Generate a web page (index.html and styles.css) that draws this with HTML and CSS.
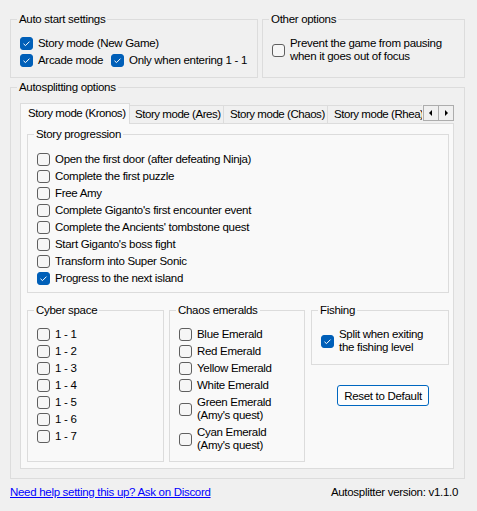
FILE: index.html
```html
<!DOCTYPE html>
<html>
<head>
<meta charset="utf-8">
<link rel="stylesheet" href="styles.css">
</head>
<body>
<div class="top">
  <fieldset class="gb auto">
    <legend>Auto start settings</legend>
    <label class="cb"><span class="box on"><svg viewBox="0 0 13 13" width="13" height="13"><path d="M3.5 6.8 L5.5 8.6 L9.5 4.6" fill="none" stroke="#fff" stroke-width="1"/></svg></span><span>Story mode (New Game)</span></label>
    <div class="row">
      <label class="cb w91"><span class="box on"><svg viewBox="0 0 13 13" width="13" height="13"><path d="M3.5 6.8 L5.5 8.6 L9.5 4.6" fill="none" stroke="#fff" stroke-width="1"/></svg></span><span>Arcade mode</span></label>
      <label class="cb"><span class="box on"><svg viewBox="0 0 13 13" width="13" height="13"><path d="M3.5 6.8 L5.5 8.6 L9.5 4.6" fill="none" stroke="#fff" stroke-width="1"/></svg></span><span>Only when entering 1 - 1</span></label>
    </div>
  </fieldset>
  <fieldset class="gb other">
    <legend>Other options</legend>
    <label class="cb multi"><span class="box"></span><span>Prevent the game from pausing<br>when it goes out of focus</span></label>
  </fieldset>
</div>

<fieldset class="gb split">
  <legend>Autosplitting options</legend>
  <div class="strip">
    <div class="tablist">
      <div class="tab sel t1">Story mode (Kronos)</div>
      <div class="tab t2">Story mode (Ares)</div>
      <div class="tab t3">Story mode (Chaos)</div>
      <div class="tab t4">Story mode (Rhea)</div>
    </div>
    <div class="scroll">
      <span class="sb"><svg viewBox="0 0 14 14" width="14" height="14"><polygon points="5,7 8,4 8,10" fill="#000"/></svg></span>
      <span class="sb"><svg viewBox="0 0 14 14" width="14" height="14"><polygon points="6,4 9,7 6,10" fill="#000"/></svg></span>
    </div>
  </div>
  <div class="panel">
    <fieldset class="gb story">
      <legend>Story progression</legend>
      <label class="cb"><span class="box"></span><span>Open the first door (after defeating Ninja)</span></label>
      <label class="cb"><span class="box"></span><span>Complete the first puzzle</span></label>
      <label class="cb"><span class="box"></span><span>Free Amy</span></label>
      <label class="cb"><span class="box"></span><span>Complete Giganto's first encounter event</span></label>
      <label class="cb"><span class="box"></span><span>Complete the Ancients' tombstone quest</span></label>
      <label class="cb"><span class="box"></span><span>Start Giganto's boss fight</span></label>
      <label class="cb"><span class="box"></span><span>Transform into Super Sonic</span></label>
      <label class="cb"><span class="box on"><svg viewBox="0 0 13 13" width="13" height="13"><path d="M3.5 6.8 L5.5 8.6 L9.5 4.6" fill="none" stroke="#fff" stroke-width="1"/></svg></span><span>Progress to the next island</span></label>
    </fieldset>
    <div class="lower">
      <fieldset class="gb cyber">
        <legend>Cyber space</legend>
        <label class="cb"><span class="box"></span><span>1 - 1</span></label>
        <label class="cb"><span class="box"></span><span>1 - 2</span></label>
        <label class="cb"><span class="box"></span><span>1 - 3</span></label>
        <label class="cb"><span class="box"></span><span>1 - 4</span></label>
        <label class="cb"><span class="box"></span><span>1 - 5</span></label>
        <label class="cb"><span class="box"></span><span>1 - 6</span></label>
        <label class="cb"><span class="box"></span><span>1 - 7</span></label>
      </fieldset>
      <fieldset class="gb chaos">
        <legend>Chaos emeralds</legend>
        <label class="cb"><span class="box"></span><span>Blue Emerald</span></label>
        <label class="cb"><span class="box"></span><span>Red Emerald</span></label>
        <label class="cb"><span class="box"></span><span>Yellow Emerald</span></label>
        <label class="cb"><span class="box"></span><span>White Emerald</span></label>
        <label class="cb multi"><span class="box"></span><span>Green Emerald<br>(Amy's quest)</span></label>
        <label class="cb multi"><span class="box"></span><span>Cyan Emerald<br>(Amy's quest)</span></label>
      </fieldset>
      <div class="fishcol">
        <fieldset class="gb fishing">
          <legend>Fishing</legend>
          <label class="cb multi"><span class="box on"><svg viewBox="0 0 13 13" width="13" height="13"><path d="M3.5 6.8 L5.5 8.6 L9.5 4.6" fill="none" stroke="#fff" stroke-width="1"/></svg></span><span>Split when exiting<br>the fishing level</span></label>
        </fieldset>
        <button class="btn">Reset to Default</button>
      </div>
    </div>
  </div>
</fieldset>

<div class="footer">
  <a href="#" class="link">Need help setting this up? Ask on Discord</a>
  <span>Autosplitter version: v1.1.0</span>
</div>
</body>
</html>
```

FILE: styles.css
```css
html, body {
  margin: 0;
  background: #f0f0f0;
}
body {
  padding: 12px 12px 0 10px;
  font-family: "Liberation Sans", Arial, sans-serif;
  font-size: 11.5px;
  letter-spacing: -0.3px;
  color: #000;
}
.top {
  display: flex;
  gap: 4px;
}
.gb {
  margin: 0;
  border: 1px solid #dcdcdc;
  padding: 8px 8px 8px 9px;
  min-width: 0;
  box-sizing: border-box;
}
.gb legend {
  padding: 0 2px;
  margin-left: -3px;
  line-height: 15px;
}
.auto { width: 248px; }
.other { width: 203px; }
.row { display: flex; }
.cb {
  display: flex;
  align-items: center;
  height: 17px;
  line-height: 13px;
  white-space: nowrap;
}
.cb.multi { height: 30px; }
.w91 { width: 91px; }
.box {
  flex: none;
  width: 13px;
  height: 13px;
  box-sizing: border-box;
  border: 1px solid #5f5f5f;
  border-radius: 3px;
  background: #f6f6f6;
  margin-right: 5px;
  display: flex;
  align-items: center;
  justify-content: center;
}
.box svg { display: block; flex: none; }
.box.on {
  background: #005fb8;
  border-color: #005fb8;
}
.split {
  margin-top: 2px;
  width: 455px;
  padding: 8px 10px 9px 9px;
}
.strip {
  position: relative;
  height: 20px;
}
.tablist {
  display: flex;
  align-items: flex-end;
  width: 402px;
  height: 21px;
  overflow: hidden;
  position: relative;
  z-index: 1;
}
.tab {
  flex: none;
  box-sizing: border-box;
  height: 18px;
  margin-bottom: 1px;
  border-top: 1px solid #dcdcdc;
  border-right: 1px solid #dcdcdc;
  background: #f0f0f0;
  line-height: 16px;
  padding-left: 5px;
  letter-spacing: -0.45px;
  white-space: nowrap;
  overflow: hidden;
}
.tab.sel {
  height: 21px;
  margin-bottom: 0;
  border-left: 1px solid #dcdcdc;
  background: #f9f9f9;
  line-height: 18px;
  padding-left: 7px;
}
.t1 { width: 110px; }
.t2 { width: 94px; }
.t3 { width: 104px; padding-left: 6px; }
.t4 { width: 110px; padding-left: 6px; }
.scroll {
  position: absolute;
  right: 0;
  top: 2px;
  display: flex;
  z-index: 2;
}
.sb {
  width: 16px;
  height: 16px;
  box-sizing: border-box;
  border: 1px solid #adadad;
  background: #f0f0f0;
  display: flex;
  align-items: center;
  justify-content: center;
}
.sb + .sb { margin-left: -1px; }
.panel {
  border: 1px solid #dcdcdc;
  background: #f9f9f9;
  padding: 3px 3px 6px 6px;
}
.story {
  width: 422px;
  padding-top: 9px;
  padding-bottom: 5px;
}
.lower {
  display: flex;
  align-items: flex-start;
  margin-top: 10px;
}
.cyber {
  width: 137px;
  align-self: stretch;
}
.chaos {
  width: 136px;
  margin-left: 5px;
  padding-bottom: 7px;
}
.fishcol {
  width: 138px;
  margin-left: 6px;
}
.fishing { width: 138px; }
.btn {
  display: block;
  margin: 20px 0 0 26px;
  width: 92px;
  height: 21px;
  border: 1px solid #0067c0;
  border-radius: 3px;
  background: #fdfdfd;
  font-family: inherit;
  font-size: 11.5px;
  letter-spacing: -0.3px;
  color: #000;
  padding: 0;
  white-space: nowrap;
}
.footer {
  display: flex;
  justify-content: space-between;
  margin-top: 6px;
  padding-right: 7px;
  line-height: 15px;
}
.link {
  color: #0000ff;
  text-decoration: underline;
}
```
